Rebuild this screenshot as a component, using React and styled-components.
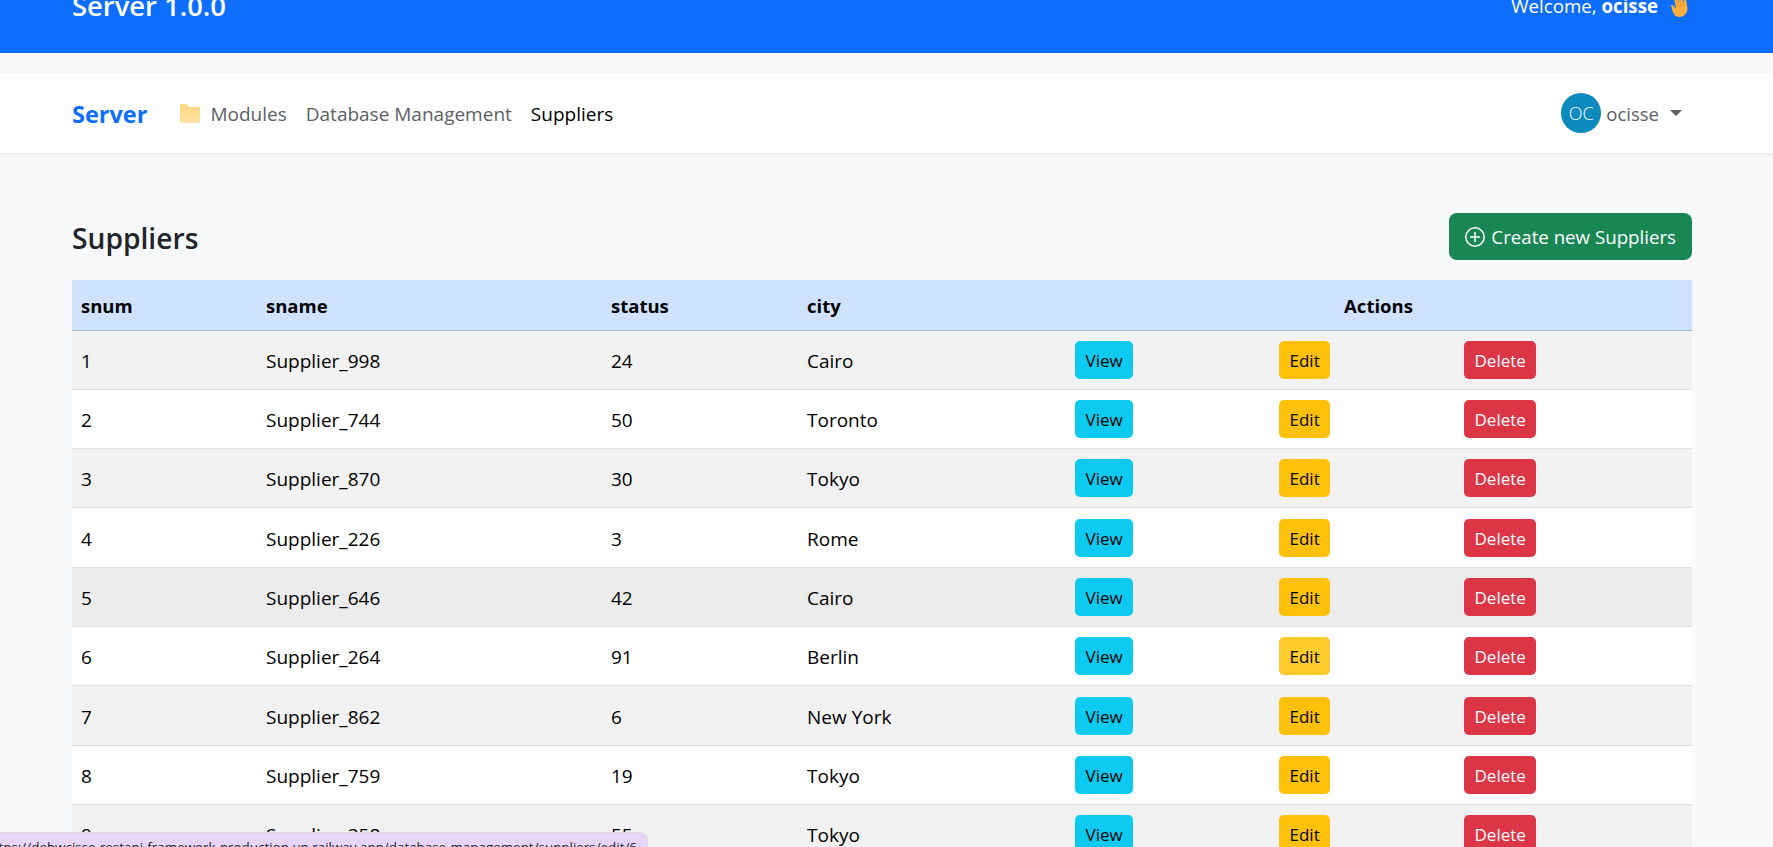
import React from 'react';
import styled, { createGlobalStyle } from 'styled-components';

const GlobalStyle = createGlobalStyle`
	html, body {
		margin: 0;
		height: 100%;
		overflow: hidden;
		background: #f8f9fa;
		font-family: "Open Sans", "Noto Sans", sans-serif;
		font-size: 19px;
		color: #212529;
	}
	* { box-sizing: border-box; }
`;

const Page = styled.div`
	height: 847px;
	overflow: hidden;
`;

const Banner = styled.header`
	display: flex;
	justify-content: space-between;
	align-items: flex-start;
	height: 53px;
	padding: 0 84px 0 72px;
	background: #0d6efd;
	color: #fff;
`;

const BannerTitle = styled.h1`
	margin: -12px 0 0;
	font-size: 27.4px;
	font-weight: 600;
	line-height: 36px;
`;

const Welcome = styled.div`
	display: flex;
	align-items: flex-start;
	gap: 9px;
	font-size: 18.7px;
	line-height: 22px;
	b { font-weight: 700; }
	span { margin-top: -5px; }
`;

const NavBar = styled.nav`
	display: flex;
	align-items: center;
	height: 80px;
	margin-top: 20px;
	padding: 0 91px 0 72px;
	background: #fff;
	box-shadow: 0 2px 4px rgba(0, 0, 0, 0.075);
`;

const Brand = styled.a`
	margin-right: 33px;
	padding-top: 1px;
	font-size: 23.5px;
	font-weight: 700;
	color: #0d6efd;
`;

const NavLink = styled.a`
	display: flex;
	align-items: center;
	gap: 10px;
	margin-right: 19px;
	padding-top: 1px;
	font-size: 19px;
	color: ${(p) => (p.$active ? '#000' : '#5c6166')};
`;

const UserMenu = styled.div`
	display: flex;
	align-items: center;
	margin-left: auto;
	font-size: 18.5px;
	color: #5c6166;
`;

const Avatar = styled.span`
	display: flex;
	align-items: center;
	justify-content: center;
	width: 40px;
	height: 40px;
	margin-right: 5px;
	border-radius: 50%;
	background: #0c8abd;
	color: #fff;
	font-size: 18px;
	font-weight: 300;
`;

const Caret = styled.span`
	width: 0;
	height: 0;
	margin-left: 11px;
	border-top: 6px solid #5c6166;
	border-left: 6px solid transparent;
	border-right: 6px solid transparent;
`;

const Main = styled.main`
	padding: 60px 81px 0 72px;
`;

const TitleRow = styled.div`
	display: flex;
	justify-content: space-between;
	align-items: center;
	height: 47px;
	margin-bottom: 20px;
`;

const Title = styled.h2`
	margin: 0;
	padding-top: 2px;
	font-size: 28.2px;
	font-weight: 600;
`;

const CreateButton = styled.button`
	display: flex;
	align-items: center;
	gap: 6px;
	height: 47px;
	padding: 0 16px;
	border: 0;
	border-radius: 8px;
	background: #198754;
	color: #fff;
	font: inherit;
	font-size: 18.7px;
`;

const Table = styled.table`
	width: 1620px;
	table-layout: fixed;
	border-collapse: collapse;
	color: #000;
`;

const HeadCell = styled.th`
	height: 50px;
	padding: 2px 9px 0;
	background: #cfe2ff;
	border-bottom: 1px solid #a6b5cc;
	text-align: ${(p) => (p.$center ? 'center' : 'left')};
	font-size: 18.5px;
	font-weight: 700;
`;

const Row = styled.tr`
	height: 59.33px;
	background: ${(p) => (p.$hover ? '#ececec' : p.$odd ? '#f2f2f2' : '#fff')};
`;

const Cell = styled.td`
	padding: 2px 9px 0;
	border-bottom: 1px solid #dee2e6;
	font-size: 19px;
`;

const ActionCell = styled.td`
	padding: 0 10px;
	border-bottom: 1px solid #dee2e6;
`;

const ActionButton = styled.button`
	height: 38px;
	padding: 1px 10.5px 0;
	border: 0;
	border-radius: 5px;
	background: ${(p) => p.$bg};
	color: ${(p) => p.$fg};
	font: inherit;
	font-size: 17px;
`;

const StatusBubble = styled.div`
	position: fixed;
	left: 0;
	bottom: 0;
	display: flex;
	justify-content: flex-end;
	width: 648px;
	height: 15px;
	padding: 4px 10px 0 0;
	overflow: hidden;
	border-top: 1px solid #d8d8d8;
	border-right: 1px solid #d8d8d8;
	border-top-right-radius: 8px;
	background: #e8d5fb;
	color: #222;
	font-size: 13.4px;
	line-height: 20px;
	white-space: nowrap;
`;

const FolderIcon = () => (
	<svg width="20" height="19" viewBox="0 0 20 19">
		<defs>
			<linearGradient id="folderFill" x1="0" y1="0" x2="0" y2="1">
				<stop offset="0" stopColor="#fcd67e" />
				<stop offset="1" stopColor="#ffe3a3" />
			</linearGradient>
		</defs>
		<path d="M0 3V1.5A1.5 1.5 0 0 1 1.5 0H6.5L9 3h9.5A1.5 1.5 0 0 1 20 4.5V18a1 1 0 0 1-1 1H1a1 1 0 0 1-1-1z" fill="url(#folderFill)" />
	</svg>
);

const WaveIcon = () => (
	<svg width="22" height="17" viewBox="0 0 22 17">
		<path d="M0.5 8c1-1 1.5-2 2.5-3" stroke="#3f8fe0" strokeWidth="1" fill="none" />
		<path d="M7-2l2-1 2 1 1 5 0-6 3 0 1 6 1-4 2 0 1.5 9c.5 4-3 9-8 9-4 0-6-3-7-6L4 5l2 0 3 4z" fill="#fbb03b" />
		<path d="M9-1l2 8M13-1l1 8M17 1l0 6" stroke="#e5952a" strokeWidth="0.7" fill="none" />
	</svg>
);

const PlusCircle = () => (
	<svg width="20" height="20" viewBox="0 0 20 20" fill="none" stroke="#fff" strokeWidth="1.5">
		<circle cx="10" cy="10" r="9.2" />
		<path d="M10 5v10M5 10h10" />
	</svg>
);

const suppliers = [
	[1, 'Supplier_998', 24, 'Cairo'],
	[2, 'Supplier_744', 50, 'Toronto'],
	[3, 'Supplier_870', 30, 'Tokyo'],
	[4, 'Supplier_226', 3, 'Rome'],
	[5, 'Supplier_646', 42, 'Cairo'],
	[6, 'Supplier_264', 91, 'Berlin'],
	[7, 'Supplier_862', 6, 'New York'],
	[8, 'Supplier_759', 19, 'Tokyo'],
	[9, 'Supplier_358', 55, 'Tokyo']
];

const columns = [185, 345, 196, 267, 204, 185, 238];

export default function App() {
	return (
		<Page>
			<GlobalStyle />
			<Banner>
				<BannerTitle>Server 1.0.0</BannerTitle>
				<Welcome>
					<span>Welcome, <b>ocisse</b></span>
					<WaveIcon />
				</Welcome>
			</Banner>
			<NavBar>
				<Brand>Server</Brand>
				<NavLink><FolderIcon />Modules</NavLink>
				<NavLink>Database Management</NavLink>
				<NavLink $active>Suppliers</NavLink>
				<UserMenu>
					<Avatar>OC</Avatar>
					ocisse
					<Caret />
				</UserMenu>
			</NavBar>
			<Main>
				<TitleRow>
					<Title>Suppliers</Title>
					<CreateButton><PlusCircle />Create new Suppliers</CreateButton>
				</TitleRow>
				<Table>
					<colgroup>
						{columns.map((w, i) => <col key={i} width={w} />)}
					</colgroup>
					<thead>
						<tr>
							<HeadCell>snum</HeadCell>
							<HeadCell>sname</HeadCell>
							<HeadCell>status</HeadCell>
							<HeadCell>city</HeadCell>
							<HeadCell $center colSpan={3}>Actions</HeadCell>
						</tr>
					</thead>
					<tbody>
						{suppliers.map(([id, name, status, city]) => (
							<Row key={id} $odd={id % 2 === 1} $hover={id === 5}>
								<Cell>{id}</Cell>
								<Cell>{name}</Cell>
								<Cell>{status}</Cell>
								<Cell>{city}</Cell>
								<ActionCell><ActionButton $bg="#0dcaf0" $fg="#000">View</ActionButton></ActionCell>
								<ActionCell><ActionButton $bg={id === 6 ? '#ffca2c' : '#ffc107'} $fg="#000">Edit</ActionButton></ActionCell>
								<ActionCell><ActionButton $bg="#dc3545" $fg="#fff">Delete</ActionButton></ActionCell>
							</Row>
						))}
					</tbody>
				</Table>
			</Main>
			<StatusBubble>https://debwcisse-restapi-framework-production.up.railway.app/database-management/suppliers/edit/6</StatusBubble>
		</Page>
	);
}
